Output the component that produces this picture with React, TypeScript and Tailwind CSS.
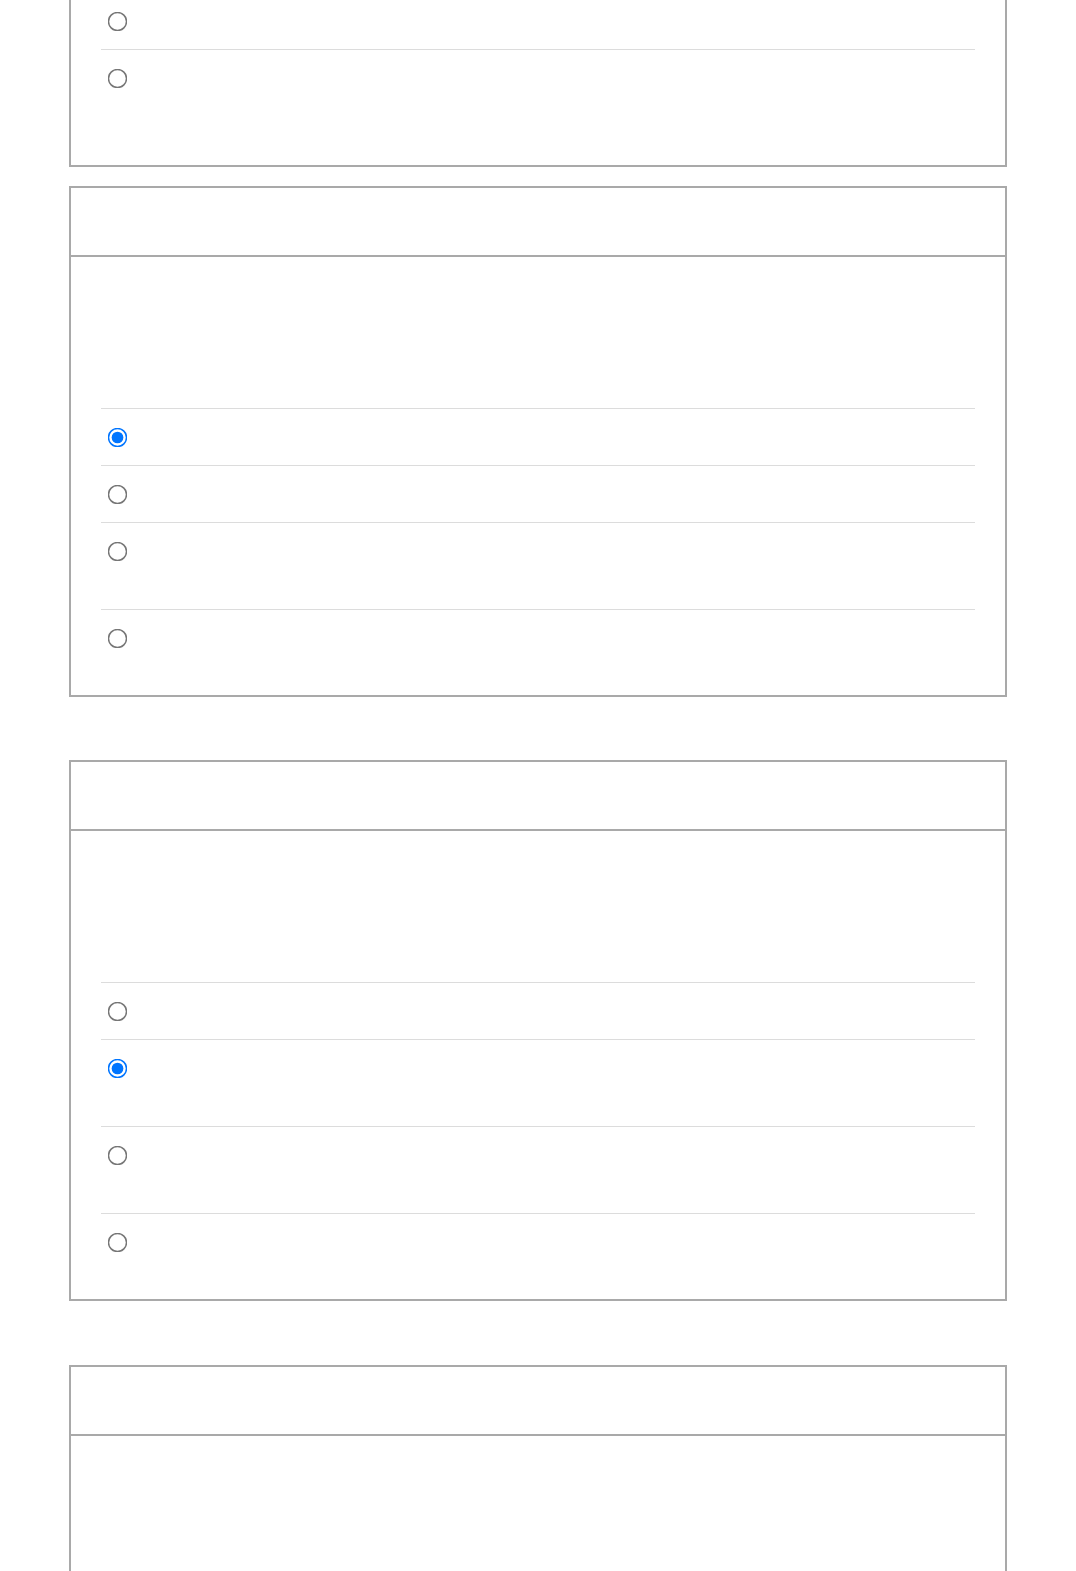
import React from 'react'

type Row = { tall: boolean; checked: boolean }

interface PanelProps {
  name: string
  rows: Row[]
  withHeader?: boolean
  clipped?: boolean
}

function OptionRow({ name, row, first, clipped }: { name: string; row: Row; first: boolean; clipped: boolean }) {
  // first row of the clipped panel has no divider above and starts cut off
  const base =
    first && clipped
      ? 'h-[49px] pt-[15px]'
      : row.tall
        ? 'h-[87px] pt-[22px] border-t border-[#dcdcdc]'
        : 'h-[57px] pt-[22px] border-t border-[#dcdcdc]'
  return (
    <div className={base}>
      <input
        type="radio"
        name={name}
        defaultChecked={row.checked}
        className="m-0 ml-[10px] block h-[13px] w-[13px] scale-150"
      />
    </div>
  )
}

function Panel({ name, rows, withHeader = true, clipped = false }: PanelProps) {
  return (
    <div
      className={
        clipped
          ? 'ml-[69px] w-[938px] border-x-2 border-b-2 border-[#a9a9a9] bg-white'
          : 'ml-[69px] w-[938px] border-2 border-[#a9a9a9] bg-white'
      }
    >
      {withHeader && <div className="h-[69px] border-b-2 border-[#a9a9a9]" />}
      <div className="px-[30px] pb-[29px]">
        {withHeader && <div className="h-[151px]" />}
        {rows.map((row, i) => (
          <OptionRow key={i} name={name} row={row} first={i === 0} clipped={clipped} />
        ))}
      </div>
    </div>
  )
}

export default function App() {
  return (
    <div className="min-h-[1571px] bg-white font-['Liberation_Sans',sans-serif]">
      <Panel
        name="q1"
        clipped
        withHeader={false}
        rows={[
          { tall: false, checked: false },
          { tall: true, checked: false },
        ]}
      />
      <div className="mt-[19px]">
        <Panel
          name="q2"
          rows={[
            { tall: false, checked: true },
            { tall: false, checked: false },
            { tall: true, checked: false },
            { tall: false, checked: false },
          ]}
        />
      </div>
      <div className="mt-[63px]">
        <Panel
          name="q3"
          rows={[
            { tall: false, checked: false },
            { tall: true, checked: true },
            { tall: true, checked: false },
            { tall: false, checked: false },
          ]}
        />
      </div>
      <div className="mt-[64px]">
        <Panel name="q4" rows={[{ tall: true, checked: false }, { tall: true, checked: false }]} />
      </div>
    </div>
  )
}
